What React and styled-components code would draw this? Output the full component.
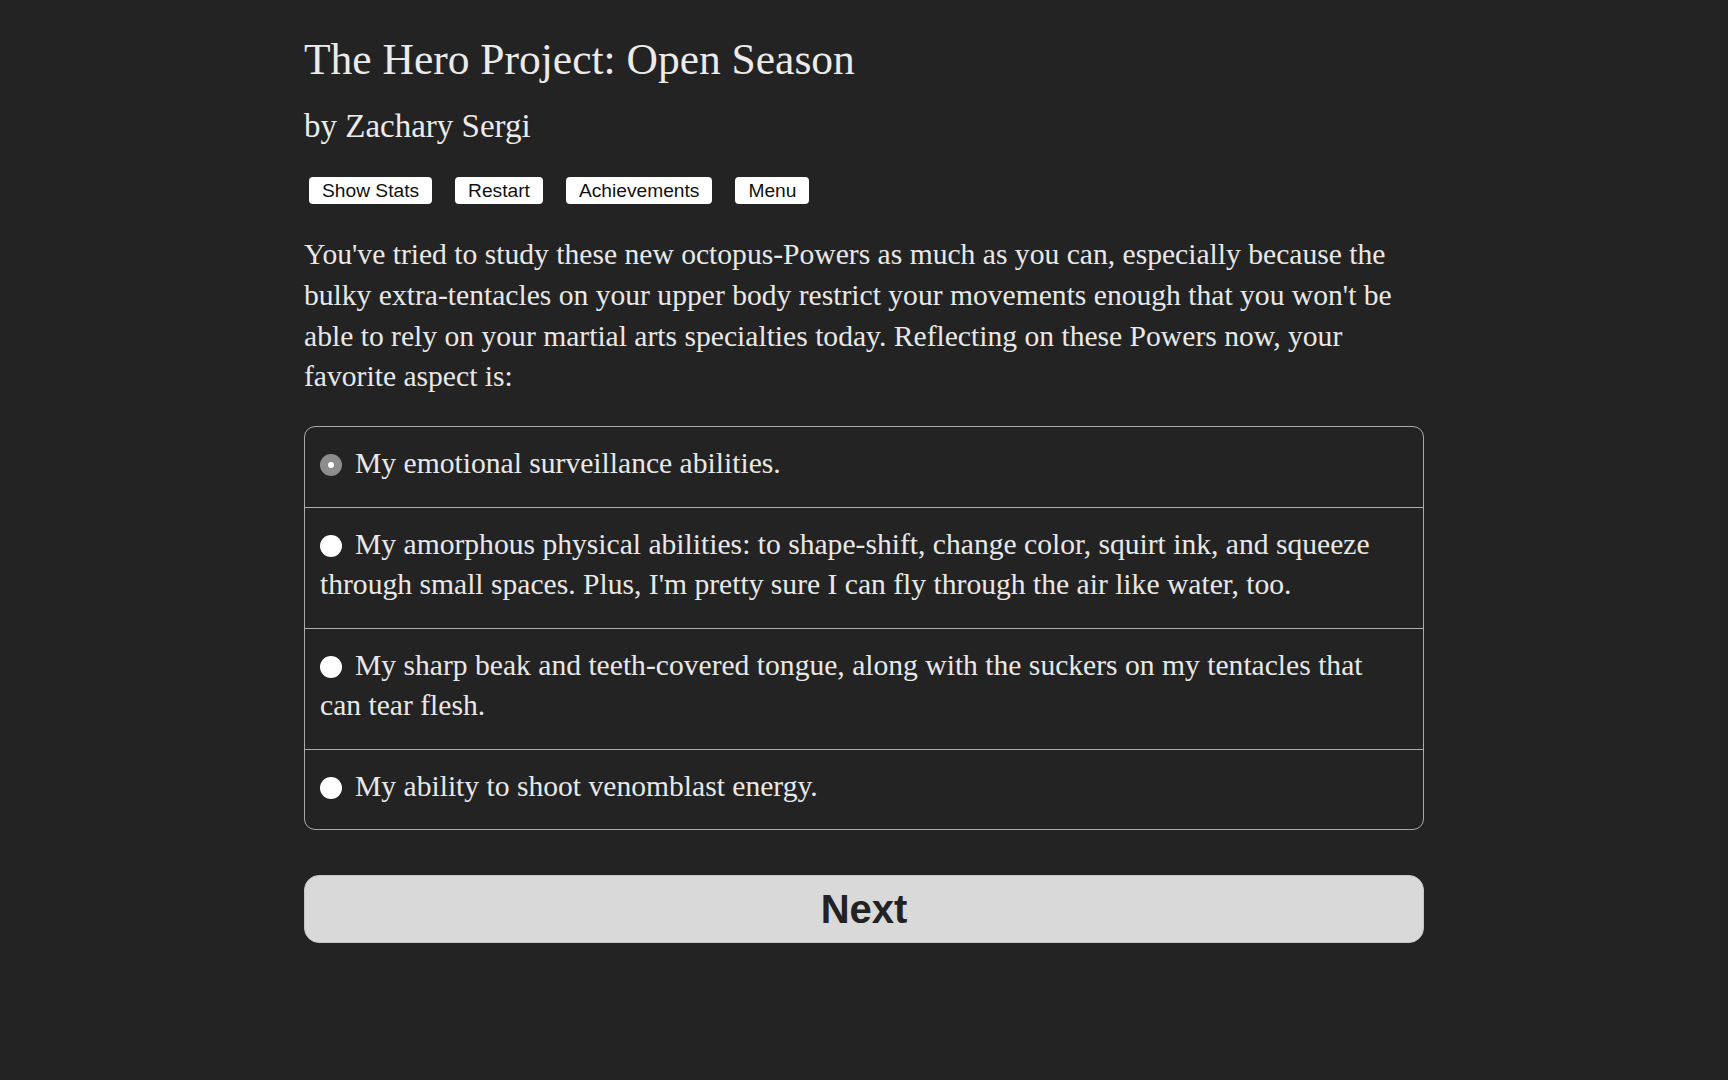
import React, { useState } from "react";
import styled, { createGlobalStyle } from "styled-components";

const Global = createGlobalStyle`
  html, body {
    margin: 0;
    padding: 0;
    background: #232323;
  }
  body {
    font-family: "Liberation Serif", "Times New Roman", serif;
    color: #e8e8e8;
  }
`;

const Page = styled.div`
  min-height: 1080px;
  background: #232323;
`;

const Column = styled.main`
  width: 1120px;
  margin: 0 auto;
  padding-top: 33px;
`;

const Title = styled.h1`
  margin: 0;
  font-family: "Liberation Serif", serif;
  font-weight: normal;
  font-size: 43.5px;
  line-height: 52px;
  color: #ebebeb;
`;

const Byline = styled.h2`
  margin: 21px 0 0;
  font-family: "Liberation Serif", serif;
  font-weight: normal;
  font-size: 33px;
  line-height: 40px;
  color: #ebebeb;
`;

const Toolbar = styled.nav`
  display: flex;
  gap: 23px;
  margin: 31px 0 0 5px;
`;

const ToolButton = styled.button`
  height: 27px;
  padding: 0 13px;
  border: none;
  border-radius: 4px;
  background: #ffffff;
  color: #111;
  font-family: "Liberation Sans", Arial, sans-serif;
  font-size: 19.2px;
  line-height: 27px;
  cursor: pointer;
`;

const Story = styled.p`
  margin: 30px 0 0;
  font-size: 29.6px;
  line-height: 40.8px;
  color: #e8e8e8;
`;

const Choices = styled.fieldset`
  margin: 29px 0 0;
  padding: 0;
  border: 1px solid #a9a9a9;
  border-radius: 11px;
  overflow: hidden;
`;

const Choice = styled.label`
  display: block;
  padding: 16px 15px 23px;
  font-size: 29.6px;
  line-height: 40.5px;
  color: #e8e8e8;
  cursor: pointer;
  & + & {
    border-top: 1px solid #a9a9a9;
  }
`;

const Radio = styled.span`
  display: inline-block;
  box-sizing: border-box;
  width: 22px;
  height: 22px;
  margin-right: 13px;
  border-radius: 50%;
  vertical-align: -3px;
  position: relative;
  background: ${(p) => (p.$checked ? "#8d8d8d" : "#ffffff")};
  &::after {
    content: "";
    display: ${(p) => (p.$checked ? "block" : "none")};
    position: absolute;
    left: 8px;
    top: 8px;
    width: 6px;
    height: 6px;
    border-radius: 50%;
    background: #ffffff;
  }
`;

const NextButton = styled.button`
  display: block;
  width: 100%;
  height: 68px;
  margin-top: 45px;
  border: 1px solid #c4c4c4;
  border-radius: 15px;
  background: #d9d9d9;
  color: #222;
  font-family: "Liberation Sans", Arial, sans-serif;
  font-weight: bold;
  font-size: 40px;
  cursor: pointer;
`;

const options = [
  "My emotional surveillance abilities.",
  "My amorphous physical abilities: to shape-shift, change color, squirt ink, and squeeze through small spaces. Plus, I'm pretty sure I can fly through the air like water, too.",
  "My sharp beak and teeth-covered tongue, along with the suckers on my tentacles that can tear flesh.",
  "My ability to shoot venomblast energy.",
];

export default function App() {
  const [selected, setSelected] = useState(0);
  return (
    <Page>
      <Global />
      <Column>
        <Title>The Hero Project: Open Season</Title>
        <Byline>by Zachary Sergi</Byline>
        <Toolbar>
          <ToolButton>Show Stats</ToolButton>
          <ToolButton>Restart</ToolButton>
          <ToolButton>Achievements</ToolButton>
          <ToolButton>Menu</ToolButton>
        </Toolbar>
        <Story>
          You've tried to study these new octopus-Powers as much as you can,
          especially because the bulky extra-tentacles on your upper body
          restrict your movements enough that you won't be able to rely on your
          martial arts specialties today. Reflecting on these Powers now, your
          favorite aspect is:
        </Story>
        <Choices>
          {options.map((text, i) => (
            <Choice key={i} onClick={() => setSelected(i)}>
              <Radio $checked={selected === i} />
              {text}
            </Choice>
          ))}
        </Choices>
        <NextButton>Next</NextButton>
      </Column>
    </Page>
  );
}
